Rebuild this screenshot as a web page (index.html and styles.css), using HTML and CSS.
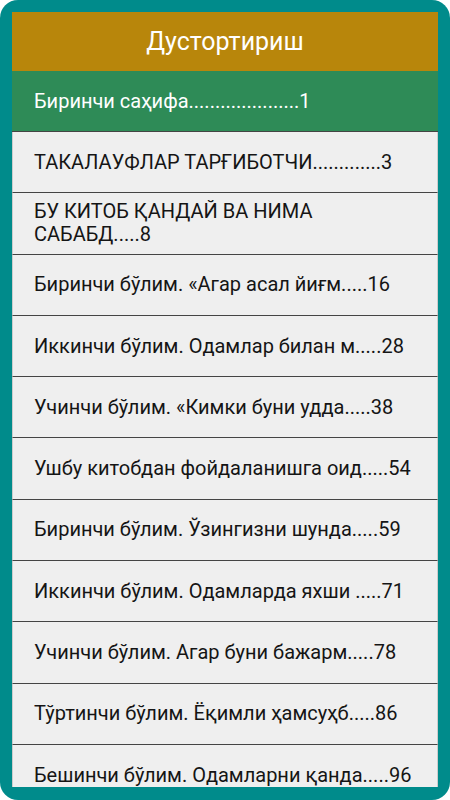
FILE: index.html
```html
<!DOCTYPE html>
<html>
	<head>
		<meta charset="UTF-8">
		<title>Дустортириш</title>
		<link rel="stylesheet" href="styles.css">
	</head>
	<body>
		<div class="frame">
			<div class="screen">
				<div class="title">Дустортириш</div>
				<ul class="toc">
					<li class="current">Биринчи саҳифа.....................1</li>
					<li>ТАКАЛАУФЛАР ТАРҒИБОТЧИ.............3</li>
					<li>БУ КИТОБ ҚАНДАЙ ВА НИМА САБАБД.....8</li>
					<li>Биринчи бўлим. «Агар асал йиғм.....16</li>
					<li>Иккинчи бўлим. Одамлар билан м.....28</li>
					<li>Учинчи бўлим. «Кимки буни удда.....38</li>
					<li>Ушбу китобдан фойдаланишга оид.....54</li>
					<li>Биринчи бўлим. Ўзингизни шунда.....59</li>
					<li>Иккинчи бўлим. Одамларда яхши .....71</li>
					<li>Учинчи бўлим. Агар буни бажарм.....78</li>
					<li>Тўртинчи бўлим. Ёқимли ҳамсуҳб.....86</li>
					<li>Бешинчи бўлим. Одамларни қанда.....96</li>
				</ul>
			</div>
		</div>
	</body>
</html>
```

FILE: styles.css
```css
* {
	margin: 0;
	padding: 0;
	list-style: none;
	box-sizing: border-box;
}

body {
	background: #fff;
	font-family: Roboto, "Noto Sans", sans-serif;
}

.frame {
	width: 450px;
	height: 800px;
	padding: 12px 12px 13px;
	background: #008b8b;
	border-radius: 18px;
}

.screen {
	height: 100%;
	overflow: hidden;
	background: #efefef;
}

.title {
	height: 59px;
	background: #b8860b;
	color: #fff;
	font-size: 25px;
	text-align: center;
	line-height: 59px;
}

.toc li {
	display: flex;
	align-items: center;
	height: 61.3px;
	padding: 0 20px 0 21px;
	border-bottom: 1px solid #444;
	border-left: 1px solid #ccc;
	border-right: 1px solid #ccc;
	font-size: 20px;
	line-height: 23px;
	color: #151515;
}

.toc li.current {
	height: 61px;
	background: #2e8b57;
	color: #fff;
	border-left: 0;
	border-right: 0;
	padding-left: 22px;
}
```
